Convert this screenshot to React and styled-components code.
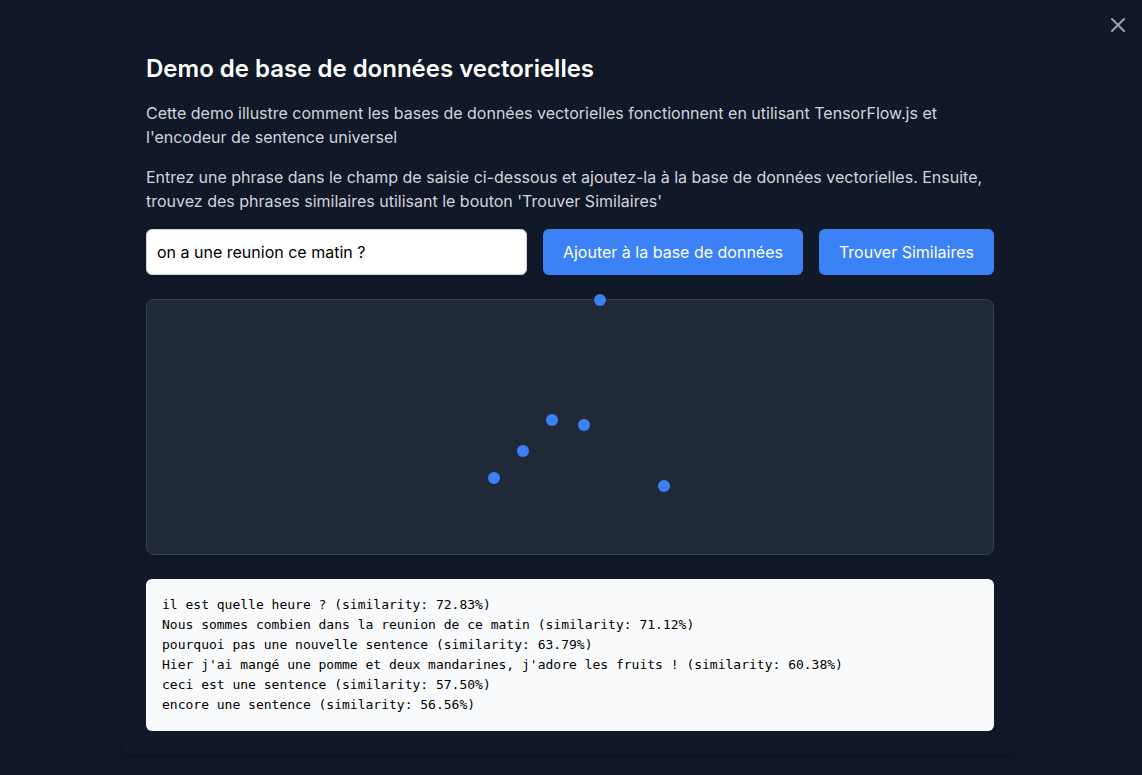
import React, { useState } from "react";
import styled, { createGlobalStyle } from "styled-components";

const GlobalStyle = createGlobalStyle`
  *, *::before, *::after { box-sizing: border-box; }
  body {
    margin: 0;
    background: #111827;
    font-family: Inter, "Liberation Sans", sans-serif;
    font-size: 16px;
    line-height: 24px;
  }
`;

const Page = styled.div`
  position: relative;
  min-height: 100vh;
  padding: 29px 26px 20px 24px;
`;

const CloseButton = styled.button`
  position: absolute;
  top: 13px;
  right: 12px;
  display: flex;
  padding: 0;
  border: 0;
  background: none;
  color: #9ca3af;
  cursor: pointer;
`;

const Card = styled.main`
  max-width: 896px;
  margin: 0 auto;
  padding: 24px;
  border-radius: 8px;
  background: #111827;
  box-shadow: 0 4px 6px -1px rgba(0, 0, 0, 0.1), 0 2px 4px -1px rgba(0, 0, 0, 0.06);
`;

const Title = styled.h1`
  margin: 0 0 16px;
  color: #ffffff;
  font-size: 24px;
  line-height: 32px;
  font-weight: 600;
`;

const Paragraph = styled.p`
  margin: 0 0 16px;
  color: #d1d5db;
`;

const Form = styled.form`
  display: flex;
  gap: 16px;
  margin-bottom: 24px;
`;

const TextField = styled.input`
  flex: 1;
  min-width: 0;
  height: 46px;
  padding: 10px;
  border: 1px solid #d1d5db;
  border-radius: 6px;
  background: #ffffff;
  color: #000000;
  font: inherit;
`;

const Button = styled.button`
  height: 46px;
  padding: 0 20px;
  border: 0;
  border-radius: 6px;
  background: #3b82f6;
  color: #ffffff;
  font: inherit;
  cursor: pointer;
`;

const Plot = styled.div`
  position: relative;
  height: 256px;
  margin-bottom: 24px;
  border: 1px solid #374151;
  border-radius: 8px;
  background: #1f2937;
`;

const Point = styled.span`
  position: absolute;
  left: ${(p) => p.$x}px;
  top: ${(p) => p.$y}px;
  width: 12px;
  height: 12px;
  border-radius: 50%;
  background: #3b82f6;
`;

const Results = styled.pre`
  margin: 0;
  padding: 16px;
  border-radius: 6px;
  background: #f9fafb;
  color: #000000;
  font-family: Consolas, "DejaVu Sans Mono", monospace;
  font-size: 13px;
  line-height: 20px;
  white-space: pre-wrap;
`;

const points = [
  { x: 447, y: -6 },
  { x: 399, y: 114 },
  { x: 431, y: 119 },
  { x: 370, y: 145 },
  { x: 341, y: 172 },
  { x: 511, y: 180 },
];

const results = [
  ["il est quelle heure ?", "72.83"],
  ["Nous sommes combien dans la reunion de ce matin", "71.12"],
  ["pourquoi pas une nouvelle sentence", "63.79"],
  ["Hier j'ai mangé une pomme et deux mandarines, j'adore les fruits !", "60.38"],
  ["ceci est une sentence", "57.50"],
  ["encore une sentence", "56.56"],
];

export default function App() {
  const [sentence, setSentence] = useState("on a une reunion ce matin ?");

  return (
    <>
      <GlobalStyle />
      <Page>
        <CloseButton type="button" aria-label="Fermer">
          <svg width="24" height="24" viewBox="0 0 24 24" fill="none" stroke="currentColor" strokeWidth="2" strokeLinecap="round" strokeLinejoin="round">
            <path d="M6 18L18 6M6 6l12 12" />
          </svg>
        </CloseButton>
        <Card>
          <Title>Demo de base de données vectorielles</Title>
          <Paragraph>
            Cette demo illustre comment les bases de données vectorielles fonctionnent en utilisant TensorFlow.js et
            l'encodeur de sentence universel
          </Paragraph>
          <Paragraph>
            Entrez une phrase dans le champ de saisie ci-dessous et ajoutez-la à la base de données vectorielles.
            Ensuite, trouvez des phrases similaires utilisant le bouton 'Trouver Similaires'
          </Paragraph>
          <Form onSubmit={(e) => e.preventDefault()}>
            <TextField
              type="text"
              aria-label="Phrase"
              value={sentence}
              onChange={(e) => setSentence(e.target.value)}
            />
            <Button type="submit">Ajouter à la base de données</Button>
            <Button type="button">Trouver Similaires</Button>
          </Form>
          <Plot>
            {points.map((p) => (
              <Point key={p.x} $x={p.x} $y={p.y} />
            ))}
          </Plot>
          <Results>{results.map(([text, score]) => `${text} (similarity: ${score}%)`).join("\n")}</Results>
        </Card>
      </Page>
    </>
  );
}
